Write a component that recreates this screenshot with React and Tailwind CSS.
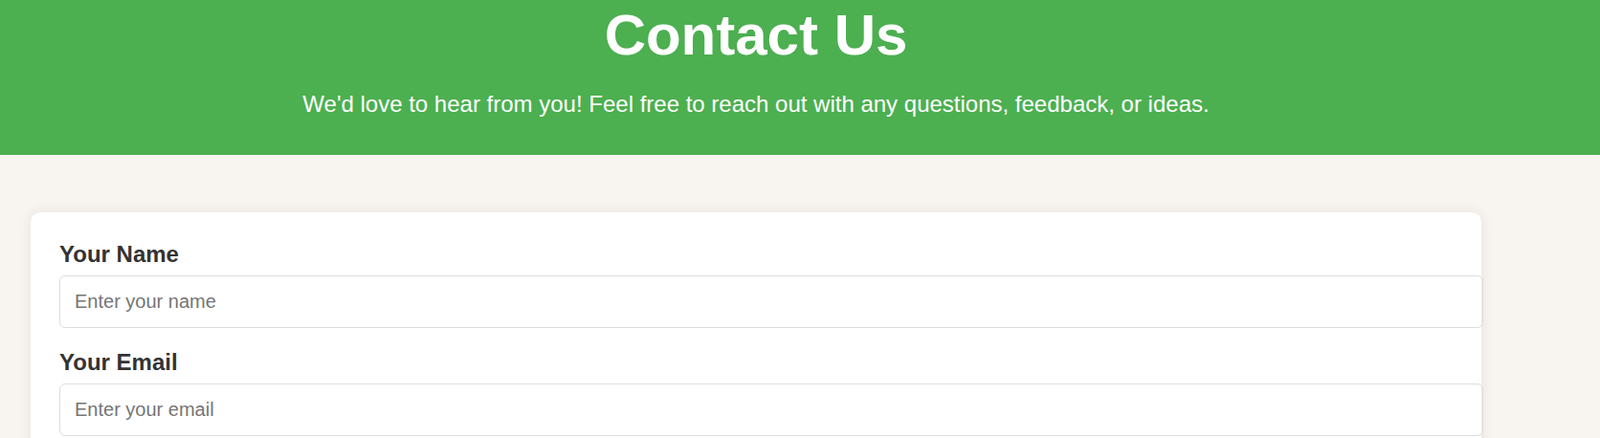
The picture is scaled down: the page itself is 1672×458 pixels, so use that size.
export default function App() {
  return (
    <div className="min-h-screen bg-[#f8f5f0] font-['Liberation_Sans',Arial,sans-serif]">
      {/* Header */}
      <header className="bg-[#4caf50] text-white">
        <div className="w-[1580px] text-center pt-[2px] pb-[39px]">
          <h1 className="text-[60px] leading-[69px] font-bold">Contact Us</h1>
          <p className="mt-[24px] text-[24px] leading-[28px]">
            We'd love to hear from you! Feel free to reach out with any questions, feedback, or ideas.
          </p>
        </div>
      </header>

      {/* Form card */}
      <div className="pt-[60px] pl-[32px]">
        <form className="w-[1516px] bg-white rounded-[10px] p-[30px] shadow-[0_0_15px_rgba(0,0,0,0.08)]">
          <div className="mb-[22px]">
            <label className="block mb-[8px] text-[24px] leading-[28px] font-bold text-[#333]">
              Your Name
            </label>
            <input
              type="text"
              placeholder="Enter your name"
              className="box-content w-full px-[15px] py-[15px] text-[20px] leading-[23px] border border-[#ddd] rounded-[6px] placeholder:text-[#757575] outline-none"
            />
          </div>
          <div className="mb-[22px]">
            <label className="block mb-[8px] text-[24px] leading-[28px] font-bold text-[#333]">
              Your Email
            </label>
            <input
              type="email"
              placeholder="Enter your email"
              className="box-content w-full px-[15px] py-[15px] text-[20px] leading-[23px] border border-[#ddd] rounded-[6px] placeholder:text-[#757575] outline-none"
            />
          </div>
        </form>
      </div>
    </div>
  );
}
